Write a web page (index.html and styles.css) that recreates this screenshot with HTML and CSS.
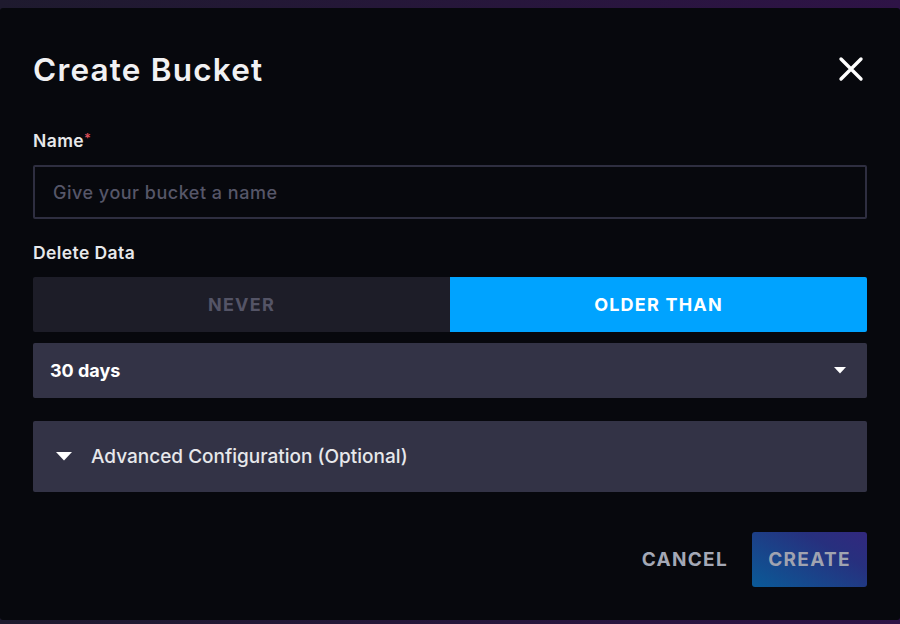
FILE: index.html
```html
<!DOCTYPE html>
<html>
<head>
<meta charset="utf-8">
<link rel="stylesheet" href="styles.css">
</head>
<body>
<div class="overlay">
  <div class="modal">
    <div class="header">
      <h1 class="title">Create Bucket</h1>
      <button class="close" aria-label="Close">
        <svg width="26" height="26" viewBox="0 0 26 26"><path d="M3 3 L23 23 M23 3 L3 23" stroke="#fff" stroke-width="3.4" stroke-linecap="round"/></svg>
      </button>
    </div>
    <div class="body">
      <label class="label label-name">Name<span class="req">*</span></label>
      <div class="input">Give your bucket a name</div>
      <label class="label label-delete">Delete Data</label>
      <div class="toggle">
        <div class="toggle-opt">NEVER</div>
        <div class="toggle-opt active">OLDER THAN</div>
      </div>
      <div class="dropdown">
        <span>30 days</span>
        <svg class="caret" width="12" height="7" viewBox="0 0 12 7"><path d="M0 0 H12 L6 6.5 Z" fill="#fff"/></svg>
      </div>
      <div class="advanced">
        <svg class="adv-caret" width="16" height="9" viewBox="0 0 16 9"><path d="M0 0 H16 L8 8.5 Z" fill="#fff"/></svg>
        <span>Advanced Configuration (Optional)</span>
      </div>
    </div>
    <div class="footer">
      <button class="btn-cancel">CANCEL</button>
      <button class="btn-create">CREATE</button>
    </div>
  </div>
</div>
</body>
</html>
```

FILE: styles.css
```css
html, body {
  margin: 0;
  padding: 0;
  height: 100%;
}
body {
  background: linear-gradient(to right, #1e1a2e, #2e1346);
  font-family: "Inter", "Roboto", sans-serif;
  overflow: hidden;
}
.overlay {
  padding-top: 8px;
  height: 624px;
  box-sizing: border-box;
}
.modal {
  background: #07080d;
  height: 612px;
  border-radius: 3px;
  box-sizing: border-box;
  padding: 0 33px 0 33px;
  display: flex;
  flex-direction: column;
}
.header {
  display: flex;
  justify-content: space-between;
  align-items: center;
  height: 122px;
  padding-top: 2px;
  box-sizing: border-box;
}
.title {
  margin: 0;
  color: #f1f1f3;
  font-size: 31.5px;
  font-weight: 600;
  letter-spacing: 1.2px;
  margin-top: -2px;
}
.close {
  background: none;
  border: 0;
  padding: 0;
  margin-right: 3px;
  display: flex;
  margin-top: -2px;
}
.body {
  display: flex;
  flex-direction: column;
}
.label {
  color: #e7e8eb;
  font-size: 17.5px;
  font-weight: 600;
  letter-spacing: 0.4px;
  height: 24px;
  line-height: 24px;
}
.label-name {
  margin-top: -1px;
}
.req {
  color: #dc4e58;
  font-size: 13px;
  vertical-align: top;
  line-height: 18px;
}
.input {
  margin-top: 12px;
  height: 54px;
  box-sizing: border-box;
  border: 2px solid #2e2e40;
  border-radius: 2px;
  padding: 0 18px;
  display: flex;
  align-items: center;
  color: #565668;
  font-size: 18px;
  font-weight: 500;
  letter-spacing: 0.5px;
}
.label-delete {
  margin-top: 22px;
}
.toggle {
  margin-top: 12px;
  display: flex;
  height: 55px;
  border-radius: 2px;
  overflow: hidden;
}
.toggle-opt {
  flex: 1;
  display: flex;
  align-items: center;
  justify-content: center;
  background: #1d1d28;
  color: #545466;
  font-size: 18px;
  font-weight: 700;
  letter-spacing: 1.2px;
}
.toggle-opt.active {
  background: #00a3ff;
  color: #ffffff;
}
.dropdown {
  margin-top: 11px;
  height: 55px;
  background: #333346;
  border-radius: 2px;
  display: flex;
  align-items: center;
  justify-content: space-between;
  padding: 0 21px 0 17px;
  color: #ffffff;
  font-size: 18px;
  font-weight: 700;
}
.caret {
  display: block;
}
.advanced {
  margin-top: 23px;
  height: 71px;
  background: #333346;
  border-radius: 2px;
  display: flex;
  align-items: center;
  padding: 0 23px;
  color: #e7e8eb;
  font-size: 19px;
  font-weight: 500;
}
.adv-caret {
  margin-right: 19px;
}
.footer {
  margin-top: 40px;
  display: flex;
  justify-content: flex-end;
  align-items: center;
  gap: 24px;
}
.footer button {
  font-family: "Inter", "Roboto", sans-serif;
  font-size: 19px;
  font-weight: 700;
  letter-spacing: 1.3px;
  border: 0;
  border-radius: 3px;
  cursor: pointer;
}
.btn-cancel {
  background: none;
  color: #a4a8b6;
  padding: 0;
}
.btn-create {
  width: 115px;
  height: 55px;
  color: #a0a3b0;
  background: linear-gradient(30deg, #0a5a97, #27307e 70%, #32287e);
  padding: 0;
}
```
